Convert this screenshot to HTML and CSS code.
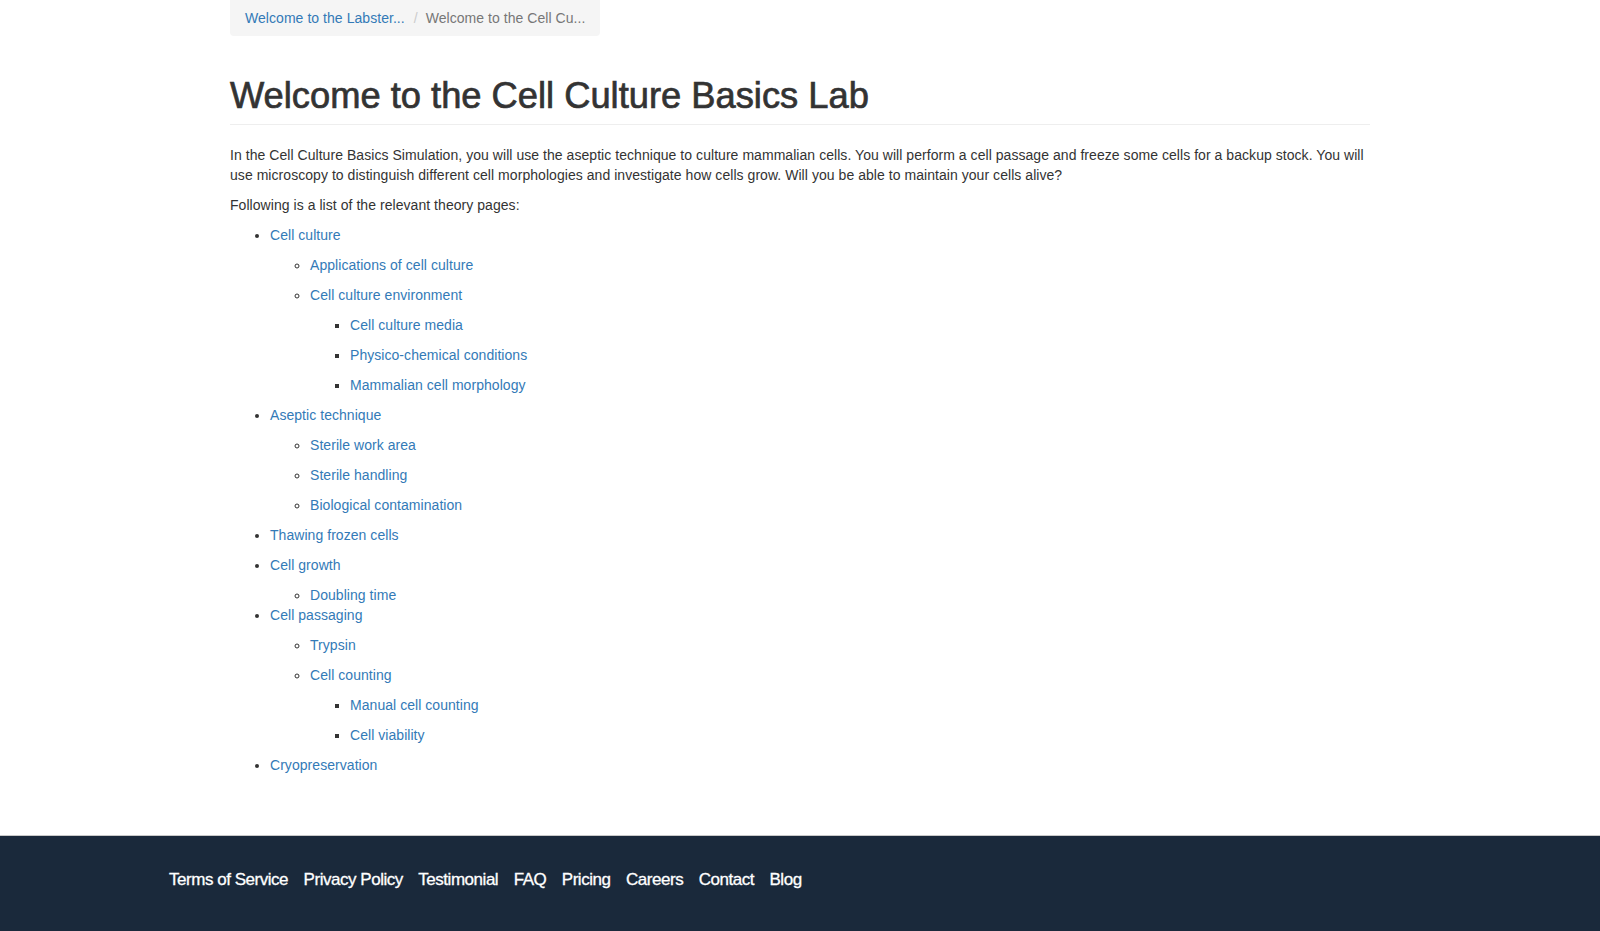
FILE: index.html
```html
<!DOCTYPE html>
<html lang="en">
<head>
<meta charset="utf-8">
<title>Welcome to the Cell Culture Basics Lab</title>
<link rel="stylesheet" href="styles.css">
</head>
<body>
<main class="container">
  <ol class="breadcrumb">
    <li><a href="#">Welcome to the Labster...</a></li>
    <li class="active">Welcome to the Cell Cu...</li>
  </ol>
  <h1 class="page-header">Welcome to the Cell Culture Basics Lab</h1>
  <p>In the Cell Culture Basics Simulation, you will use the aseptic technique to culture mammalian cells. You will perform a cell passage and freeze some cells for a backup stock. You will use microscopy to distinguish different cell morphologies and investigate how cells grow. Will you be able to maintain your cells alive?</p>
  <p>Following is a list of the relevant theory pages:</p>
  <ul class="toc">
    <li><p><a href="#">Cell culture</a></p>
      <ul>
        <li><p><a href="#">Applications of cell culture</a></p></li>
        <li><p><a href="#">Cell culture environment</a></p>
          <ul>
            <li><p><a href="#">Cell culture media</a></p></li>
            <li><p><a href="#">Physico-chemical conditions</a></p></li>
            <li><p><a href="#">Mammalian cell morphology</a></p></li>
          </ul>
        </li>
      </ul>
    </li>
    <li><p><a href="#">Aseptic technique</a></p>
      <ul>
        <li><p><a href="#">Sterile work area</a></p></li>
        <li><p><a href="#">Sterile handling</a></p></li>
        <li><p><a href="#">Biological contamination</a></p></li>
      </ul>
    </li>
    <li><p><a href="#">Thawing frozen cells</a></p></li>
    <li><p><a href="#">Cell growth</a></p>
      <ul>
        <li><a href="#">Doubling time</a></li>
      </ul>
    </li>
    <li><p><a href="#">Cell passaging</a></p>
      <ul>
        <li><p><a href="#">Trypsin</a></p></li>
        <li><p><a href="#">Cell counting</a></p>
          <ul>
            <li><p><a href="#">Manual cell counting</a></p></li>
            <li><p><a href="#">Cell viability</a></p></li>
          </ul>
        </li>
      </ul>
    </li>
    <li><p><a href="#">Cryopreservation</a></p></li>
  </ul>
</main>
<footer class="site-footer">
  <nav class="footer-inner">
    <a href="#">Terms of Service</a>
    <a href="#">Privacy Policy</a>
    <a href="#">Testimonial</a>
    <a href="#">FAQ</a>
    <a href="#">Pricing</a>
    <a href="#">Careers</a>
    <a href="#">Contact</a>
    <a href="#">Blog</a>
  </nav>
</footer>
</body>
</html>
```

FILE: styles.css
```css
* { box-sizing: border-box; }
html, body { margin: 0; padding: 0; }
body {
  font-family: "Liberation Sans", Arial, Helvetica, sans-serif;
  font-size: 14px;
  line-height: 20px;
  letter-spacing: 0.05px;
  color: #333;
  background: #fff;
}
a { color: #337ab7; text-decoration: none; }

.container {
  width: 1170px;
  margin: 0 auto;
  padding: 0 15px 50px;
}

.breadcrumb {
  display: inline-flex;
  list-style: none;
  margin: 0;
  padding: 8px 15px;
  background: #f5f5f5;
  border-radius: 0 0 4px 4px;
}
.breadcrumb li + li::before {
  content: "/";
  color: #ccc;
  padding: 0 8px 0 9px;
}
.breadcrumb .active { color: #777; }

.page-header {
  font-size: 36.3px;
  font-weight: 400;
  -webkit-text-stroke: 0.7px #333;
  line-height: 39.6px;
  margin: 40px 0 20px;
  padding-bottom: 8px;
  border-bottom: 1px solid #eee;
  letter-spacing: 0;
}

p { margin: 0 0 10px; }

.toc, .toc ul {
  margin: 0;
  padding-left: 40px;
}

.site-footer {
  background: #1a293b;
  border-top: 1px solid #c9c9c9;
  padding: 34px 0 46px;
}
.footer-inner {
  width: 1262px;
  margin: 0 auto;
  display: flex;
  gap: 15.5px;
}
.footer-inner a {
  color: #fff;
  font-size: 17px;
  line-height: 20px;
  letter-spacing: -0.47px;
  -webkit-text-stroke: 0.3px #fff;
}
```
